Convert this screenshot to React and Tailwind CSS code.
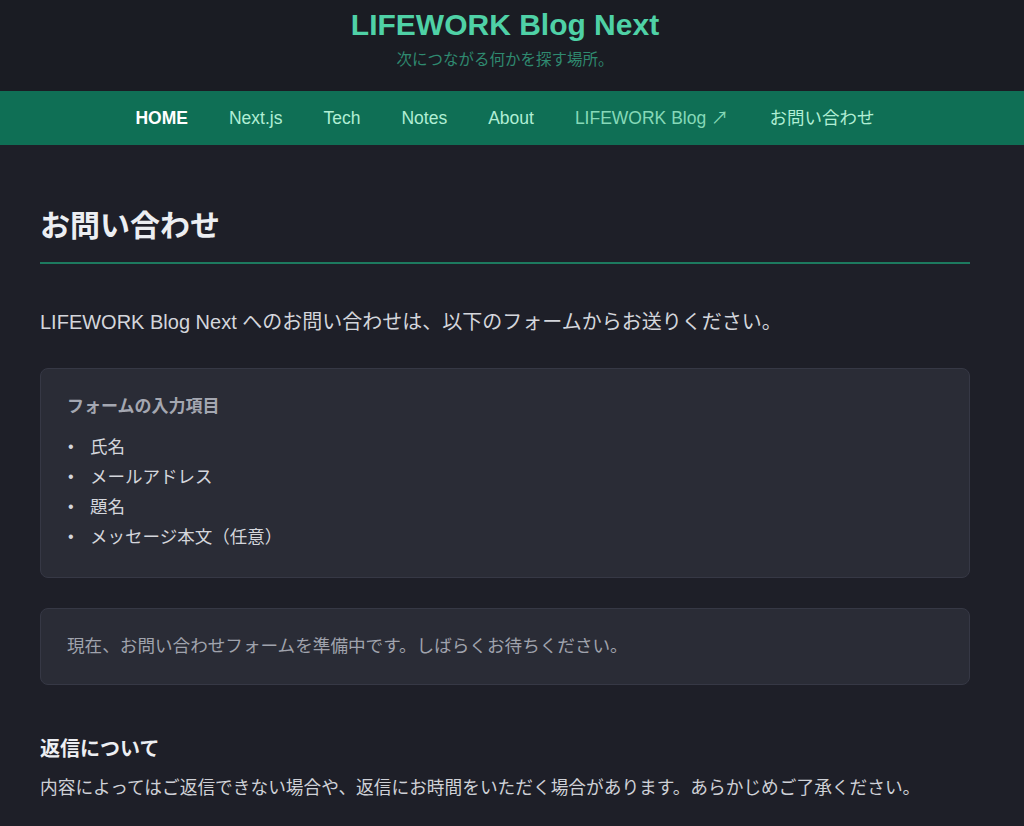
import React from 'react';

const navItems = [
  { label: 'HOME', active: true },
  { label: 'Next.js' },
  { label: 'Tech' },
  { label: 'Notes' },
  { label: 'About' },
  { label: 'LIFEWORK Blog ↗', external: true },
  { label: 'お問い合わせ' },
];

const formFields = ['氏名', 'メールアドレス', '題名', 'メッセージ本文（任意）'];

export default function App() {
  return (
    <div
      className="min-h-screen bg-[#1e1f28] text-[#e5e7eb]"
      style={{ fontFamily: '"Liberation Sans", "Noto Sans CJK JP", sans-serif' }}
    >
      <header className="bg-[#1a1c23] pt-[7px] pb-[21px] pr-[14px] text-center">
        <h1 className="text-[30px] font-bold leading-[36px] text-[#4fd1a6]">LIFEWORK Blog Next</h1>
        <p className="mt-[7px] text-[15.5px] leading-[20px] text-[#2f8a70]">次につながる何かを探す場所。</p>
      </header>

      <nav className="bg-[#0f6f55]">
        <ul className="flex h-[54px] items-center justify-center gap-[41px] pr-[14px] text-[17.5px]">
          {navItems.map((item) => (
            <li key={item.label}>
              <a
                href="#"
                className={
                  item.active
                    ? 'font-bold text-white'
                    : item.external
                      ? 'text-[#86d9b8]'
                      : 'text-[#b0eed4]'
                }
              >
                {item.label}
              </a>
            </li>
          ))}
        </ul>
      </nav>

      <main className="pl-10 pr-[54px] pt-[61px] pb-6">
        <h2 className="border-b-2 border-[#1d7a5f] pb-[16px] text-[30px] font-bold leading-[40px] text-[#eceef2]">
          お問い合わせ
        </h2>

        <p className="mt-[43px] text-[20px] leading-[30px] text-[#d4d6dc]">
          LIFEWORK Blog Next へのお問い合わせは、以下のフォームからお送りください。
        </p>

        <section className="mt-[31px] rounded-lg border border-[#363845] bg-[#2a2c36] px-[26px] pt-[26px] pb-[25px]">
          <h3 className="text-[17px] font-bold leading-[24px] text-[#a4a7b1]">フォームの入力項目</h3>
          <ul className="mt-[13px] text-[17.5px] leading-[30px] text-[#d4d6dc]">
            {formFields.map((field) => (
              <li key={field} className="flex items-center">
                <span className="w-[23px] pl-[1px] text-[16px]">•</span>
                {field}
              </li>
            ))}
          </ul>
        </section>

        <section className="mt-[30px] rounded-lg border border-[#363845] bg-[#2a2c36] px-[26px] pt-[24px] pb-[25px]">
          <p className="text-[17.6px] leading-[26px] text-[#a0a3ad]">
            現在、お問い合わせフォームを準備中です。しばらくお待ちください。
          </p>
        </section>

        <h3 className="mt-[50px] text-[20px] font-bold leading-[28px] text-[#eceef2]">返信について</h3>
        <p className="mt-[11px] text-[17.7px] leading-[28px] text-[#cfd1d7]">
          内容によってはご返信できない場合や、返信にお時間をいただく場合があります。あらかじめご了承ください。
        </p>
      </main>
    </div>
  );
}
